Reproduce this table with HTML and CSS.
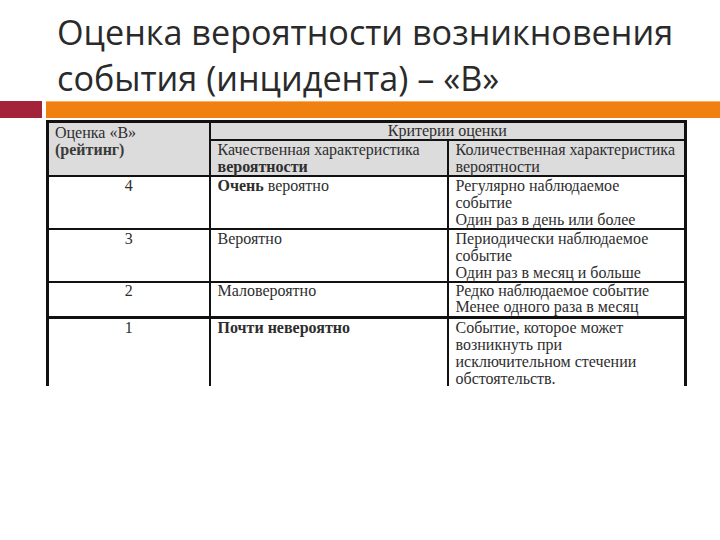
FILE: index.html
```html
<!DOCTYPE html>
<html lang="ru">
<head>
<meta charset="utf-8">
<link rel="stylesheet" href="styles.css">
</head>
<body>
<div class="slide">
  <h1 class="title">Оценка вероятности возникновения<br>события (инцидента) – «В»</h1>
  <div class="bar">
    <div class="bar-red"></div>
    <div class="bar-orange"></div>
  </div>
  <div class="table-wrap">
    <table class="grid">
      <colgroup>
        <col class="c1"><col class="c2"><col class="c3">
      </colgroup>
      <tr class="h1">
        <td class="head rating" rowspan="2">Оценка «В»<br><span class="semi">(рейтинг)</span></td>
        <td class="head crit" colspan="2">Критерии оценки</td>
      </tr>
      <tr class="h2">
        <td class="head sub">Качественная характеристика<br><b>вероятности</b></td>
        <td class="head sub">Количественная характеристика<br>вероятности</td>
      </tr>
      <tr class="r4">
        <td class="num">4</td>
        <td><b>Очень</b> вероятно</td>
        <td>Регулярно наблюдаемое<br>событие<br>Один раз в день или более</td>
      </tr>
      <tr class="r3">
        <td class="num">3</td>
        <td>Вероятно</td>
        <td>Периодически наблюдаемое<br>событие<br>Один раз в месяц и больше</td>
      </tr>
      <tr class="r2">
        <td class="num">2</td>
        <td>Маловероятно</td>
        <td>Редко наблюдаемое событие<br>Менее одного раза в месяц</td>
      </tr>
      <tr class="r1">
        <td class="num">1</td>
        <td><b>Почти невероятно</b></td>
        <td>Событие, которое может<br>возникнуть при<br>исключительном стечении<br>обстоятельств.</td>
      </tr>
    </table>
  </div>
</div>
</body>
</html>
```
FILE: styles.css
```css
html, body {
  margin: 0;
  padding: 0;
  background: #ffffff;
}
.slide {
  width: 720px;
  height: 540px;
  overflow: hidden;
}
.title {
  margin: 0;
  padding: 9px 0 0 57px;
  font-family: "Open Sans", "Noto Sans", sans-serif;
  font-weight: 400;
  font-size: 34.2px;
  line-height: 46px;
  color: #2a2a2a;
  white-space: nowrap;
}
.bar {
  display: flex;
  gap: 4px;
  height: 17px;
}
.bar-red {
  width: 42px;
  background: #a3233a;
}
.bar-orange {
  flex: 1;
  background: #f08010;
  border-top: 1px solid #f6b060;
}
.table-wrap {
  margin: 2px 0 0 45px;
  width: 644px;
  height: 266px;
  overflow: hidden;
  padding-left: 1px;
}
.grid {
  border-collapse: collapse;
  table-layout: fixed;
  width: 638px;
  font-family: "Liberation Serif", "Times New Roman", serif;
  font-size: 16px;
  line-height: 17px;
  color: #2e2e2e;
  border-top: 3px solid #111;
  border-left: 3px solid #111;
  border-right: 3px solid #111;
}
.c1 { width: 162px; }
.c2 { width: 238px; }
.c3 { width: 238px; }
.grid td {
  vertical-align: top;
  white-space: nowrap;
  padding: 0 0 0 7px;
  border-left: 2px solid #111;
  border-top: 2px solid #111;
}
.grid td.head {
  background: #dcdcdc;
}
.grid td.rating {
  border-left: none;
  padding: 1px 0 0 6px;
  line-height: 17px;
}
.semi { font-weight: 700; color: #3a3a3a; }
.grid td.crit {
  text-align: center;
  padding: 0;
  border-top: none;
  line-height: 15.5px;
}
.grid td.num {
  text-align: center;
  border-left: none;
  padding-left: 0;
}
.grid tr.h1 td { border-top: none; }
.grid tr.r2 td { line-height: 16.5px; }
.grid tr.r1 td { height: 70px; border-top-width: 3px; }
.grid b { font-weight: 700; }
```
